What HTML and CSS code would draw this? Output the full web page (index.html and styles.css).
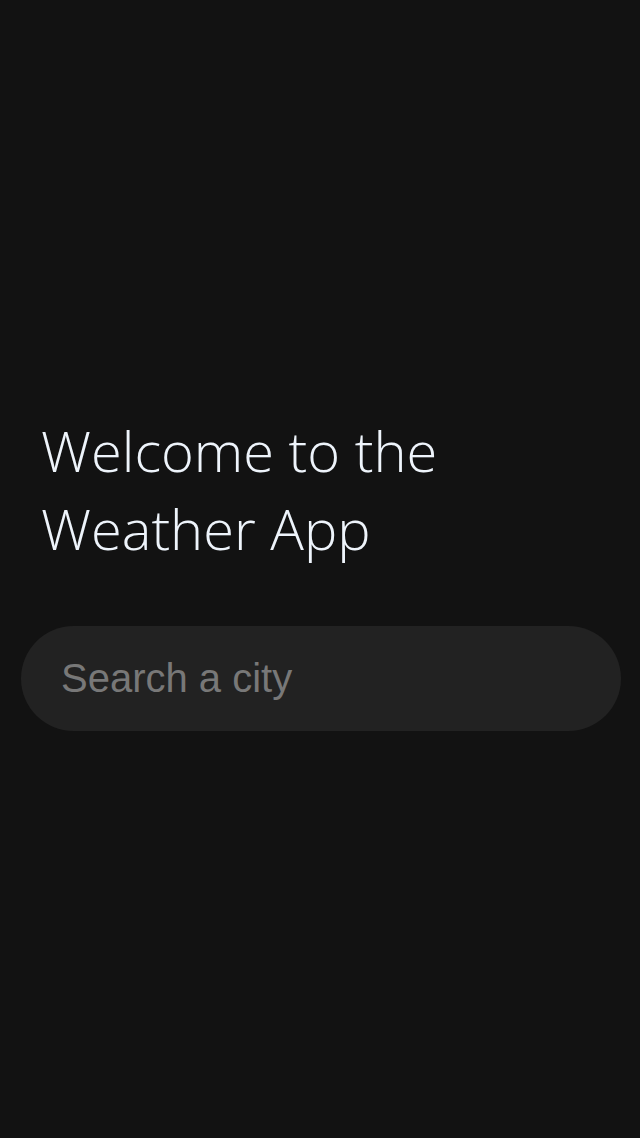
FILE: index.html
```html
<!DOCTYPE html>
<html lang="en">
<head>
<meta charset="utf-8">
<title>Weather App</title>
<link rel="stylesheet" href="styles.css">
</head>
<body>
<main class="page">
  <h1 class="title">Welcome to the<br>Weather App</h1>
  <input class="search" type="text" placeholder="Search a city">
</main>
</body>
</html>
```
FILE: styles.css
```css
html, body {
  margin: 0;
  padding: 0;
  background: #121212;
}
.page {
  box-sizing: border-box;
  min-height: 1138px;
  padding: 3px 19px 0 21px;
  display: flex;
  flex-direction: column;
  justify-content: center;
}
.title {
  margin: 0 0 59px 20px;
  font-family: "Open Sans", sans-serif;
  font-weight: 300;
  font-size: 56px;
  line-height: 78px;
  color: #eef4fb;
}
.search {
  box-sizing: border-box;
  width: 100%;
  height: 105px;
  border: none;
  outline: none;
  border-radius: 53px;
  background: #222222;
  padding: 0 40px;
  font-family: "Liberation Sans", Arial, sans-serif;
  font-size: 40px;
  color: #dddddd;
}
.search::placeholder {
  color: #787878;
}
```
